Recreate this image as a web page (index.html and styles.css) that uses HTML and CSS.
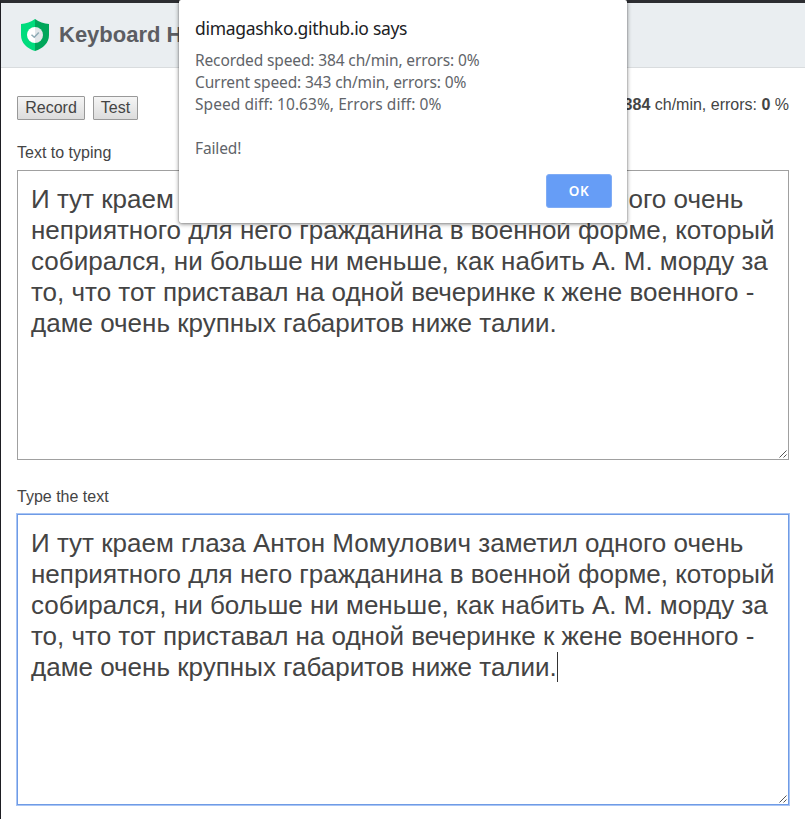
FILE: index.html
```html
<!DOCTYPE html>
<html lang="en">
<head>
<meta charset="utf-8">
<title>Keyboard Handwriting</title>
<link rel="stylesheet" href="styles.css">
</head>
<body>
<div class="page">
  <header class="header">
    <svg class="logo" width="28" height="32" viewBox="0 0 28 32">
      <path fill="#00dc7d" d="M14 0C10 3 5 4.700 0 5V16C0 24 6 29.500 14 32Z"/>
      <path fill="#00a65a" d="M14 0C18 3 23 4.700 28 5V16C28 24 22 29.500 14 32Z"/>
      <path fill="#fff" d="M14 8A8 8 0 0 0 14 24Z"/>
      <path fill="#e1e6e9" d="M14 8A8 8 0 0 1 14 24Z"/>
      <path fill="none" stroke="#8eabb5" stroke-width="1.500" d="M10.500 15.700L13.300 18.300L17.800 13.500"/>
    </svg>
    <h1 class="title">Keyboard H</h1>
  </header>
  <main class="content">
    <div class="toolbar">
      <div class="buttons">
        <button class="btn record" type="button">Record</button>
        <button class="btn test" type="button">Test</button>
      </div>
      <div class="stats"><b>384</b> ch/min, errors: <b>0</b> %</div>
    </div>
    <div class="label">Text to typing</div>
    <div class="area">И тут краем глаза Антон Момулович заметил одного очень<br>неприятного для него гражданина в военной форме, который<br>собирался, ни больше ни меньше, как набить А. М. морду за<br>то, что тот приставал на одной вечеринке к жене военного -<br>даме очень крупных габаритов ниже талии.
      <svg class="grip" width="8" height="8" viewBox="0 0 8 8"><path d="M.5 7.500L7.500 .5M4.500 7.500L7.500 4.500"/></svg>
    </div>
    <div class="label second">Type the text</div>
    <div class="area focused">И тут краем глаза Антон Момулович заметил одного очень<br>неприятного для него гражданина в военной форме, который<br>собирался, ни больше ни меньше, как набить А. М. морду за<br>то, что тот приставал на одной вечеринке к жене военного -<br>даме очень крупных габаритов ниже талии.<span class="caret"></span>
      <svg class="grip" width="8" height="8" viewBox="0 0 8 8"><path d="M.5 7.500L7.500 .5M4.500 7.500L7.500 4.500"/></svg>
    </div>
  </main>
</div>
<div class="dialog">
  <div class="dialog-title"><span>dimagashko.github.io says</span></div>
  <div class="message">
    <div class="m1">Recorded speed: 384 ch/min, errors: 0%</div>
    <div class="m2">Current speed: 343 ch/min, errors: 0%</div>
    <div class="m3">Speed diff: 10.63%, Errors diff: 0%</div>
    <div>&nbsp;</div>
    <div class="m4">Failed!</div>
  </div>
  <button class="ok" type="button">OK</button>
</div>
</body>
</html>
```
FILE: styles.css
```css
* { box-sizing: border-box; }
body {
  margin: 0;
  height: 819px;
  overflow: hidden;
  background: #fff;
  color: #444;
  font-family: "Liberation Sans", Arial, sans-serif;
  font-size: 16px;
}
.page {
  height: 819px;
  border-top: 3px solid #2c2d31;
  border-left: 1px solid #1e1e23;
}
.header {
  display: flex;
  align-items: center;
  height: 65px;
  padding-left: 20px;
  background: #eaeef1;
  border-bottom: 1px solid #d9dcde;
}
.logo { display: block; }
.title {
  margin: 0 0 0 10px;
  font-size: 22px;
  line-height: 26px;
  color: #5c5d62;
  white-space: nowrap;
}
.content { padding: 28px 16px 0; }
.toolbar {
  display: flex;
  justify-content: space-between;
  height: 24px;
}
.buttons { display: flex; gap: 8px; }
.btn {
  height: 24px;
  padding: 0;
  border: 1px solid #999;
  border-radius: 1px;
  background: linear-gradient(#f5f5f5, #dcdcdc);
  color: #444;
  font: 16px/20px "Liberation Sans", Arial, sans-serif;
}
.record { width: 68px; }
.test { width: 45px; }
.stats { line-height: 18px; }
.label {
  height: 18px;
  margin: 24px 0 8px;
  line-height: 18px;
}
.label.second { margin-top: 28px; }
.area {
  position: relative;
  width: 772px;
  height: 290px;
  padding: 13px;
  border: 1px solid #a0a0a0;
  font-size: 26px;
  line-height: 31px;
  white-space: nowrap;
}
.focused {
  height: 291px;
  border-color: #6f9be5;
  box-shadow: 0 0 0 1px #a9c5f5;
}
.grip {
  position: absolute;
  right: 1px;
  bottom: 1px;
}
.grip path { fill: none; stroke: #555; stroke-width: 1; }
.caret {
  display: inline-block;
  width: 1px;
  height: 30px;
  margin-right: -1px;
  vertical-align: -6px;
  background: #333;
}
.dialog {
  position: absolute;
  top: 0;
  left: 179px;
  width: 448px;
  height: 223px;
  padding: 16px 16px 0;
  border-radius: 2px;
  background: #fff;
  box-shadow: 0 0 1px rgba(0,0,0,.6), 0 1px 4px rgba(0,0,0,.5);
  font-family: "Noto Sans", "Open Sans", sans-serif;
}
.dialog-title {
  height: 24px;
  font-size: 17.5px;
  line-height: 24px;
  letter-spacing: -.3px;
  color: #202124;
  white-space: nowrap;
}
.message {
  margin-top: 9px;
  font-size: 15.5px;
  line-height: 22px;
  color: #616469;
  white-space: nowrap;
}
.m1, .m2, .m4 { letter-spacing: -.13px; }
.m3 { letter-spacing: .05px; }
.ok {
  position: absolute;
  left: 367px;
  top: 174px;
  width: 66px;
  height: 34px;
  padding: 0;
  border: 1px solid #80acf5;
  border-radius: 3px;
  background: #669df6;
  color: #fff;
  font: 600 13.5px/30px "Noto Sans", sans-serif;
  letter-spacing: .5px;
}
```
